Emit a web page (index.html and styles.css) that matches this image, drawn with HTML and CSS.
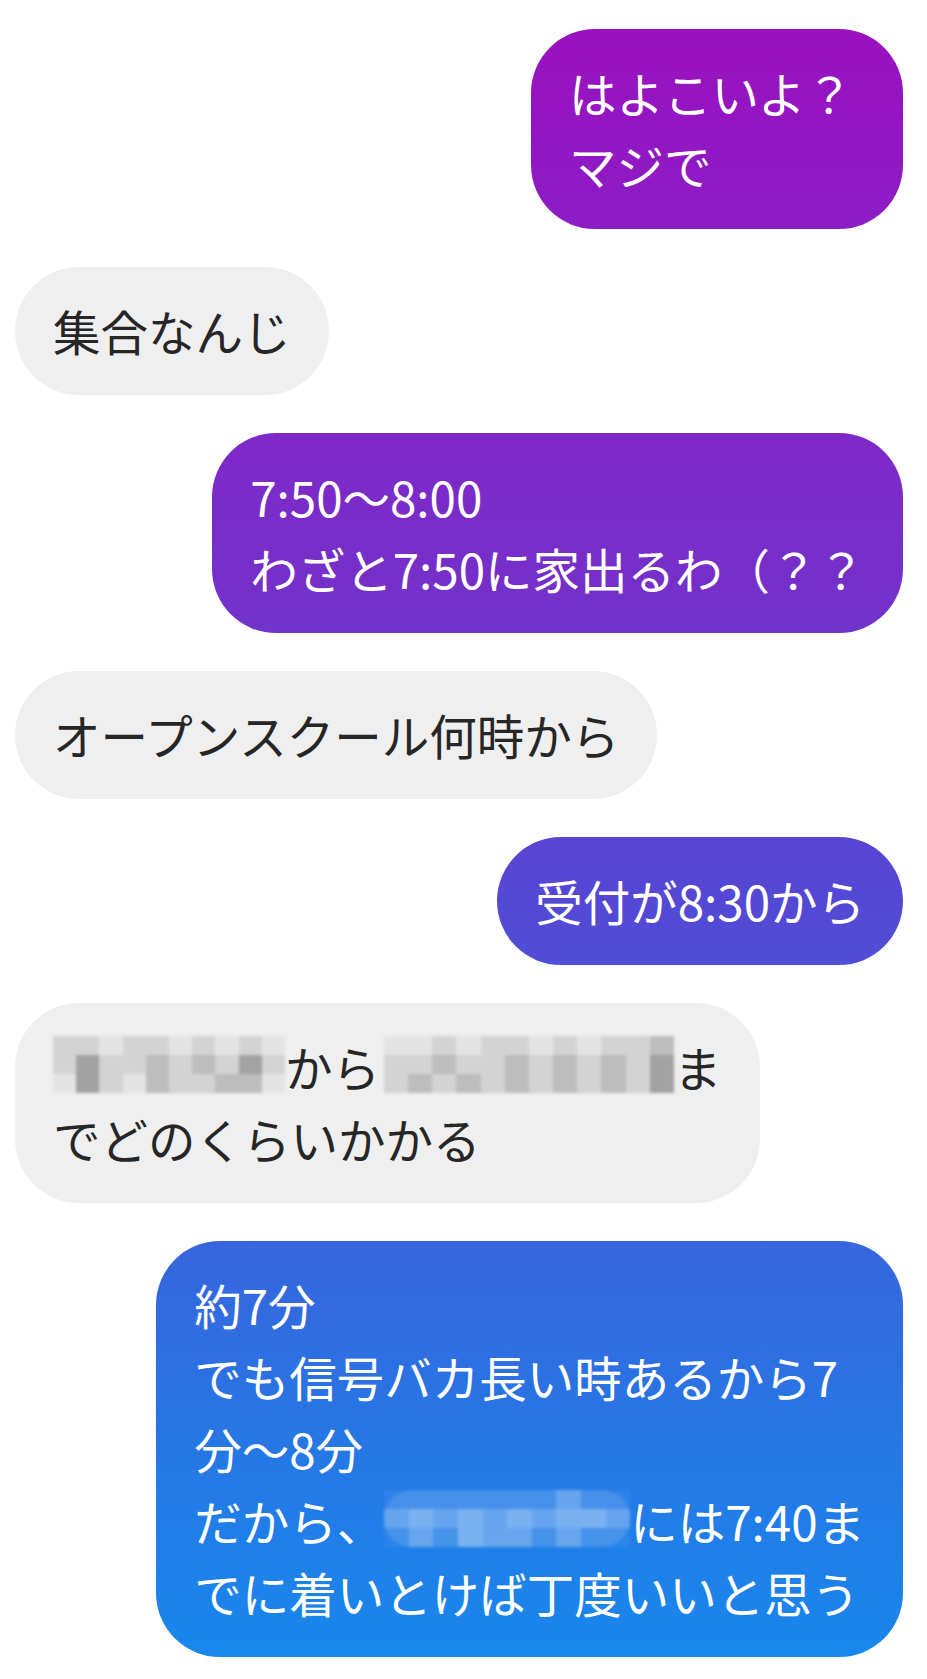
FILE: index.html
```html
<!DOCTYPE html>
<html lang="ja">
<head>
  <meta charset="UTF-8">
  <meta name="viewport" content="width=device-width, initial-scale=1.0">
  <title>Chat</title>
  <link rel="stylesheet" href="styles.css">
</head>
<body>
  <div class="chat">
    <div class="msg out wide">はよこいよ？<br>マジで</div>

    <div class="msg in">集合なんじ</div>

    <div class="msg out">7:50〜8:00<br>わざと7:50に家出るわ（？？</div>

    <div class="msg in">オープンスクール何時から</div>

    <div class="msg out">受付が8:30から</div>

    <div class="msg in"><span class="mosaic gray w1"><span class="cells"><i class="s1"></i><i class="s1"></i><i></i><i class="s1"></i><i class="s3"></i><i class="s3"></i><i></i><i class="s1"></i><i class="s1"></i><i class="s1"></i><i class="s1"></i><i></i><i class="s1"></i><i class="s2"></i><i class="s2"></i><i></i><i class="s1"></i><i class="s1"></i><i class="s1"></i><i class="s2"></i><i class="s1"></i><i></i><i class="s1"></i><i class="s2"></i><i class="s1"></i><i class="s3"></i><i class="s2"></i><i></i><i class="s1"></i><i></i></span></span>から<span class="mosaic gray w2"><span class="cells"><i></i><i class="s1"></i><i class="s1"></i><i></i><i class="s1"></i><i class="s2"></i><i class="s1"></i><i class="s2"></i><i class="s1"></i><i></i><i class="s1"></i><i class="s2"></i><i class="s1"></i><i class="s1"></i><i class="s1"></i><i class="s1"></i><i class="s2"></i><i class="s2"></i><i></i><i class="s1"></i><i class="s1"></i><i class="s1"></i><i class="s2"></i><i class="s2"></i><i></i><i class="s1"></i><i class="s1"></i><i class="s1"></i><i class="s2"></i><i class="s2"></i><i class="s1"></i><i class="s1"></i><i class="s1"></i><i class="s2"></i><i class="s3"></i><i class="s3"></i></span></span>ま<br>でどのくらいかかる</div>

    <div class="msg out">約7分<br>でも信号バカ長い時あるから7<br>分〜8分<br>だから、<span class="mosaic blue w3"><span class="cells"><i></i><i class="s1"></i><i></i><i></i><i class="s2"></i><i class="s1"></i><i></i><i class="s1"></i><i></i><i></i><i class="s2"></i><i class="s2"></i><i></i><i class="s1"></i><i class="s1"></i><i></i><i class="s2"></i><i class="s1"></i><i></i><i class="s1"></i><i></i><i class="s1"></i><i class="s2"></i><i class="s1"></i><i></i><i class="s2"></i><i></i><i></i><i class="s1"></i><i></i></span></span>には7:40ま<br>でに着いとけば丁度いいと思う</div>
  </div>
</body>
</html>
```

FILE: styles.css
```css
body {
  margin: 0;
  background: #fff;
  font-family: "Noto Sans CJK JP", "Noto Sans", sans-serif;
}
.chat {
  display: flex;
  flex-direction: column;
  gap: 38px;
  padding: 29px 24px 22px 15px;
}
.msg {
  padding: 28px 38px 28px 38px;
  font-size: 47.5px;
  line-height: 72px;
  border-radius: 64px;
  white-space: nowrap;
}
.msg.wide {
  padding-right: 50px;
}
.in {
  align-self: flex-start;
  background: #efefef;
  color: #262626;
}
.out {
  align-self: flex-end;
  color: #fff;
  background: linear-gradient(to bottom, #9c0fbe 0%, #8a1ec6 15%, #7530c9 35%, #5646d4 52%, #3a62dc 72%, #2677e4 86%, #1789ee 100%) fixed;
}

/* pixelated blur over names */
.mosaic {
  display: inline-block;
  height: 57px;
  margin-top: 5px;
  vertical-align: top;
  filter: blur(1.5px);
}
.mosaic .cells {
  display: grid;
  grid-auto-flow: column;
  grid-template-rows: repeat(3, 1fr);
  grid-auto-columns: 1fr;
  height: 100%;
}
.mosaic.w1 { width: 232px; }
.mosaic.w2 { width: 290px; margin-left: 4px; }
.mosaic.w3 { width: 246px; border-radius: 28px; }
.gray i { background: #e4e4e4; }
.gray i.s1 { background: #d3d3d3; }
.gray i.s2 { background: #bdbdbd; }
.gray i.s3 { background: #a2a2a2; }
.blue { background: rgba(255, 255, 255, 0.12); }
.blue i { background: rgba(255, 255, 255, 0.05); }
.blue i.s1 { background: rgba(255, 255, 255, 0.22); }
.blue i.s2 { background: rgba(255, 255, 255, 0.32); }
```
